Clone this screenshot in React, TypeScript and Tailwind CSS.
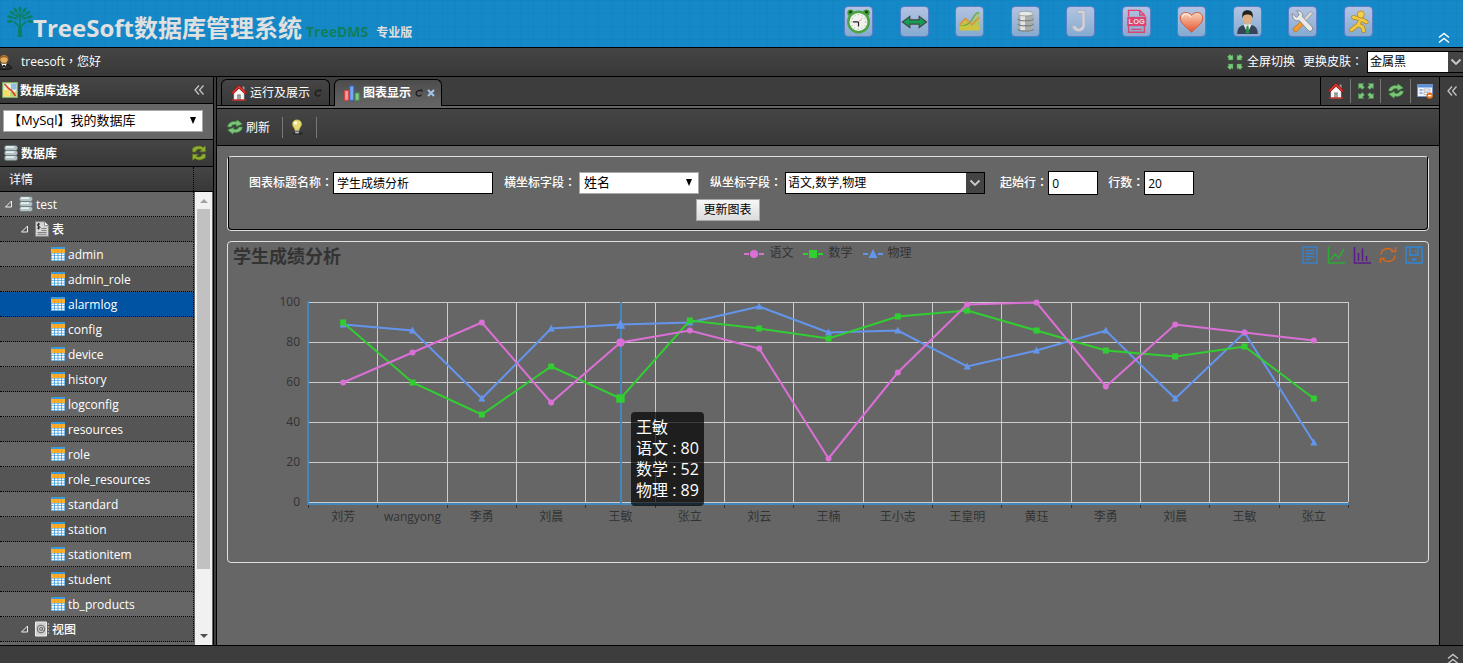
import { useState, type ReactNode } from 'react';

type Kind = 'circle' | 'square' | 'triangle';

interface Series {
  name: string;
  color: string;
  kind: Kind;
  values: number[];
}

const CATEGORIES = ['刘芳', 'wangyong', '李勇', '刘晨', '王敏', '张立', '刘云', '王楠', '王小志', '王皇明', '黄珏', '李勇', '刘晨', '王敏', '张立'];

const SERIES: Series[] = [
  { name: '语文', color: '#da70d6', kind: 'circle', values: [60, 75, 90, 50, 80, 86, 77, 22, 65, 99, 100, 58, 89, 85, 81] },
  { name: '数学', color: '#32cd32', kind: 'square', values: [90, 60, 44, 68, 52, 91, 87, 82, 93, 96, 86, 76, 73, 78, 52] },
  { name: '物理', color: '#6495ed', kind: 'triangle', values: [89, 86, 52, 87, 89, 90, 98, 85, 86, 68, 76, 86, 52, 85, 30] },
];

const TABLES = ['admin', 'admin_role', 'alarmlog', 'config', 'device', 'history', 'logconfig', 'resources', 'role', 'role_resources', 'standard', 'station', 'stationitem', 'student', 'tb_products'];

const BAR = 'bg-linear-to-b from-[#454545] to-[#383838]';

// full-width punctuation centred in its cell
function Punct({ children }: { children: string }) {
  return <span className="font-['Noto_Sans_CJK_TC',sans-serif] leading-none">{children}</span>;
}

/* ---------- small icons ---------- */

function Svg({ children, className = 'size-4', box = '0 0 16 16' }: { children: ReactNode; className?: string; box?: string }) {
  return (
    <svg viewBox={box} className={`shrink-0 ${className}`} fill="none" aria-hidden="true">
      {children}
    </svg>
  );
}

function HomeIcon() {
  return (
    <Svg>
      <path d="M11.5 1.5h2v4h-2z" fill="#999" />
      <path d="M3 8l5-5 5 5v7H3z" fill="#f7f7f7" stroke="#ccc" strokeWidth=".5" />
      <path d="M1 8.5L8 1.7l7 6.8" stroke="#b31312" strokeWidth="2.6" />
      <path d="M1.6 7.8L8 1.6l6.4 6.2" stroke="#f0594a" strokeWidth="1" />
      <path d="M6.3 9.5h3.4V15H6.3z" fill="#777" />
      <path d="M7.2 10.5h1.6V15H7.2z" fill="#aaa" />
      <path d="M1 15h14" stroke="#c9291f" strokeWidth="1.4" />
    </Svg>
  );
}

function RefreshIcon() {
  return (
    <Svg>
      <path d="M.6 8C.8 4.200 5 1.500 9.300 2.800L10 .8l5.400 4.300L9 7.800l.5-1.900C6.800 5 4.600 6 4.200 8z" fill="#7cc577" stroke="#3b8540" strokeWidth=".6" />
      <path d="M15.400 8c-.2 3.800-4.400 6.500-8.700 5.200L6 15.200.6 10.900 7 8.200l-.5 1.900c2.700.9 4.900-.1 5.300-2.100z" fill="#7cc577" stroke="#3b8540" strokeWidth=".6" />
    </Svg>
  );
}

function ExpandIcon() {
  return (
    <Svg>
      <g fill="#7cc57c" stroke="#3f8f44" strokeWidth=".4">
        <path d="M.5.5h5.500L4.500 2l2 2.200-2.300 2.300L2 4.500.5 6z" />
        <path d="M15.500.5H10L11.500 2l-2 2.200 2.300 2.300L14 4.500 15.500 6z" />
        <path d="M.5 15.500h5.500L4.500 14l2-2.200-2.300-2.300L2 11.500.5 10z" />
        <path d="M15.500 15.500H10l1.500-1.500-2-2.200 2.300-2.300L14 11.500l1.500-1.500z" />
      </g>
    </Svg>
  );
}

// four arrows that point inwards
function ShrinkIcon() {
  return (
    <Svg>
      <g fill="#7cc57c" stroke="#3f8f44" strokeWidth=".4">
        <path d="M6 6H.7L2 4.700.3 3 3 .3 4.700 2 6 .7z" />
        <path d="M10 6h5.300L14 4.700 15.700 3 13 .3 11.300 2 10 .7z" />
        <path d="M6 10H.7L2 11.300.3 13 3 15.700 4.700 14 6 15.300z" />
        <path d="M10 10h5.300L14 11.300l1.700 1.700-2.700 2.700-1.700-1.700-1.300 1.300z" />
      </g>
    </Svg>
  );
}

function FormDeleteIcon() {
  return (
    <Svg>
      <path d="M.5 1.500h15v12H.5z" fill="#eef4fc" stroke="#6c95cc" />
      <path d="M1 2h14v2.500H1z" fill="#5b8fdc" />
      <path d="M2.500 7h3M2.500 10h3" stroke="#4679b8" />
      <path d="M7 6h6v2H7zM7 9.500h4v2H7z" fill="#fff" stroke="#999" strokeWidth=".6" />
      <circle cx="12.700" cy="12.700" r="3" fill="#f07a1c" stroke="#b9500b" strokeWidth=".5" />
      <path d="M11 12.700h3.400" stroke="#fff" strokeWidth="1.200" />
    </Svg>
  );
}

function BarsIcon() {
  return (
    <Svg>
      <path d="M.7 5.500h4v9.800h-4z" fill="#f39a9a" stroke="#e23c3c" />
      <path d="M5.800 1h4v14.300h-4z" fill="#79a9ee" stroke="#2d68cf" />
      <path d="M11.100 8h4v7.300h-4z" fill="#86c68b" stroke="#3d9a45" />
    </Svg>
  );
}

function BulbIcon() {
  return (
    <Svg>
      <ellipse cx="9" cy="14.600" rx="5" ry="1" fill="#222" />
      <path d="M8 .8c2.900 0 4.700 2 4.700 4.500 0 2.300-2.300 3.200-2.500 5.900H5.800c-.2-2.700-2.500-3.600-2.500-5.900C3.300 2.800 5.100.8 8 .8z" fill="#e8da72" stroke="#a8963c" strokeWidth=".6" />
      <circle cx="6.500" cy="4" r="1.700" fill="#fffbd6" />
      <path d="M6.200 11.200h3.600v3.200H6.200z" fill="#bbb" />
      <path d="M6.200 12.500h3.600" stroke="#555" strokeWidth=".8" />
    </Svg>
  );
}

function MapIcon() {
  return (
    <Svg>
      <path d="M.7.7h14.600v14.600H.7z" fill="#e9efd0" stroke="#7fae62" strokeWidth="1.200" />
      <path d="M9 1.500h5.500v6H9z" fill="#8fbfe4" />
      <path d="M1.500 8h6v6.500h-6z" fill="#f5dc6a" />
      <path d="M8 10h6.500v4.500H8z" fill="#b9d66f" />
      <path d="M2.500 2l4 4.500L10 9l3.500 5" stroke="#dd3b2b" strokeWidth="1.600" />
    </Svg>
  );
}

function DatabaseIcon() {
  return (
    <Svg>
      {[0.5, 5.5, 10.5].map((y) => (
        <g key={y}>
          <rect x="1.500" y={y} width="13" height="5" rx="2" fill="#b4c1c4" stroke="#62757a" strokeWidth=".7" />
          <path d={`M3 ${y + 1.6}h8`} stroke="#f4fafa" strokeWidth="1.400" />
        </g>
      ))}
    </Svg>
  );
}

function SyncIcon() {
  return (
    <Svg>
      <path d="M1.500 7V3.500C5 .5 9.500.5 12 2.500L14.500.8v6H8.700l2-2C8.600 3.300 5.500 4 4.500 7z" fill="#8fad2f" stroke="#5b7416" strokeWidth=".6" />
      <path d="M14.500 9v3.500C11 15.500 6.500 15.500 4 13.500l-2.500 1.700v-6h5.800l-2 2c2.100 1.500 5.200.8 6.200-2.200z" fill="#8fad2f" stroke="#5b7416" strokeWidth=".6" />
    </Svg>
  );
}

function InvoiceIcon() {
  return (
    <Svg>
      <path d="M1.500.7h9l4 4v10.600h-13z" fill="#d6d6d6" stroke="#888" />
      <path d="M10.500.7v4h4" fill="#fff" stroke="#888" />
      <path d="M7.500 7.500h5M7.500 9.500h5M3.500 11.500h9M3.500 13.300h9" stroke="#777" strokeWidth=".9" />
      <path d="M6 3.300C5 2.500 3.200 2.800 3.200 4S6 5 6 6.300 4 7.700 3 6.800M4.600 2v6.500" stroke="#222" strokeWidth=".9" />
    </Svg>
  );
}

function BookIcon() {
  return (
    <Svg>
      <path d="M1.500 1h11v14h-11z" fill="#cfcfcf" stroke="#f0f0f0" />
      <path d="M14.500 2v12" stroke="#999" strokeWidth="1.500" strokeDasharray="2 1" />
      <circle cx="7" cy="8" r="3.800" stroke="#666" />
      <circle cx="7" cy="8" r="1.500" stroke="#666" />
      <path d="M8.500 6.500v2.300c.5 1 1.700.6 1.900-.4" stroke="#666" strokeWidth=".8" />
    </Svg>
  );
}

function GridIcon() {
  return (
    <Svg>
      <path d="M1 1h14v14H1z" fill="#3c9ad8" />
      <path d="M1 3h14v4H1z" fill="#fbb02d" />
      {[7.5, 10, 12.5].map((y) =>
        [1.6, 5, 8.4, 11.8].map((x) => <rect key={`${x}-${y}`} x={x} y={y} width="2.600" height="1.800" fill="#fff" />)
      )}
      <path d="M4.700 3v4M8.100 3v4M11.400 3v4" stroke="#f28c13" strokeWidth=".6" />
    </Svg>
  );
}

function UserIcon() {
  return (
    <Svg className="h-4 w-3" box="4 0 12 16">
      <path d="M1 14.500c0-3 3-4.500 7-4.500s7.500 1.500 7.500 4.500c-3 1.500-11.500 1.500-14.500 0z" fill="#2c2c2c" stroke="#0c0c0c" strokeWidth=".8" />
      <path d="M5 9.500h6L8 14z" fill="#fff" />
      <path d="M7 11h2v2H7z" fill="#222" />
      <circle cx="8" cy="5.200" r="4.200" fill="#e3ab5e" stroke="#7a4c16" strokeWidth=".8" />
      <path d="M4 5C4 .5 12 .5 12 5c-2-2-5-2.400-8 0z" fill="#99601f" />
    </Svg>
  );
}

function ReloadMark() {
  return (
    <Svg className="size-2" box="0 0 8 8">
      <path d="M6.500 5.500A2.800 2.800 0 1 1 5.600 2" stroke="#1c1c1c" strokeWidth="1.300" />
      <path d="M4.500.5h3v3z" fill="#1c1c1c" />
    </Svg>
  );
}

function Chevrons({ dir, className }: { dir: 'up' | 'left'; className: string }) {
  return (
    <Svg className={`size-3 ${className}`} box="0 0 12 12">
      {dir === 'up' ? (
        <path d="M1 5.500l5-4 5 4M1 10.500l5-4 5 4" stroke="currentColor" strokeWidth="1.500" />
      ) : (
        <path d="M6 1.500L2 6l4 4.500M10.500 1.500l-4 4.500 4 4.500" stroke="currentColor" strokeWidth="1.300" />
      )}
    </Svg>
  );
}

function ComboArrow() {
  return (
    <Svg className="h-2 w-3" box="0 0 12 8">
      <path d="M1.500 1.500L6 6l4.500-4.500" stroke="#ccc" strokeWidth="1.800" />
    </Svg>
  );
}

function Logo() {
  return (
    <Svg className="mt-0.5 h-8 w-[26px]" box="1 2 26 33">
      <path d="M12.500 34l.5-11-5-5M15.500 34L15 23l5-5M14 34V12" stroke="#0c8067" strokeWidth="1.800" />
      <g fill="#0c8067">
        {[-100, -75, -50, -25, 0, 25, 50, 75, 100].map((a) => (
          <ellipse key={a} cx="14" cy="5.500" rx="1.500" ry="3.200" transform={`rotate(${a} 14 16)`} />
        ))}
        {[-75, -45, -15, 15, 45, 75].map((a) => (
          <ellipse key={a} cx="14" cy="11" rx="1.200" ry="2.300" transform={`rotate(${a} 14 16)`} />
        ))}
      </g>
    </Svg>
  );
}

/* ---------- header launchers ---------- */

const LAUNCHERS: { label: string; art: ReactNode }[] = [
  {
    label: '定时任务',
    art: (
      <>
        <circle cx="6" cy="6" r="3.500" fill="#3e9a36" />
        <circle cx="23" cy="6" r="3.500" fill="#3e9a36" />
        <circle cx="6" cy="5.500" r="1.500" fill="#163a12" />
        <circle cx="23" cy="5.500" r="1.500" fill="#163a12" />
        <circle cx="14.500" cy="16" r="11" fill="#f0f2ee" stroke="#4aa33f" strokeWidth="2.600" />
        <circle cx="14.500" cy="16" r="7.800" stroke="#999" strokeDasharray="1 3" />
        <path d="M14.500 16H8.500M14.500 16v5" stroke="#222" strokeWidth="1.300" />
        <path d="M14.500 16l4-4" stroke="#e284a4" />
      </>
    ),
  },
  {
    label: '数据交换',
    art: <path d="M1.500 16l8-6v3.700h10V10l8 6-8 6v-3.700h-10V22z" fill="#169c55" stroke="#454545" strokeWidth="1.200" />,
  },
  {
    label: '图表',
    art: (
      <>
        <path d="M4 20l6-7 6 5 9-7v14H4z" fill="#c9c24a" />
        <path d="M4 20c8 1 12-4 14-8s4-6 7-6v13c-5 2-12 4-21 0z" fill="#a9c96b" opacity=".7" />
        <path d="M4 20c8 1 12-4 14-8s4-6 7-6" stroke="#5da845" strokeWidth="1.200" />
        <path d="M4 19l6-7 7 7 8-8" stroke="#ea8b2f" strokeWidth="1.400" />
        <path d="M4 20h21v5H4z" fill="#cdc43f" />
      </>
    ),
  },
  {
    label: '数据库',
    art: (
      <>
        <path d="M6.500 7v17c0 3 16.500 3 16.500 0V7z" fill="#a9adac" />
        <path d="M9 8v17h5V8z" fill="#e0e3e2" />
        <ellipse cx="14.700" cy="7" rx="8.200" ry="2.500" fill="#e6e9e8" stroke="#8d9392" strokeWidth=".8" />
        <path d="M6.500 12.500c0 3 16.500 3 16.500 0M6.500 18c0 3 16.500 3 16.500 0M6.500 23.500c0 3 16.500 3 16.500 0" stroke="#747a79" strokeWidth="1.200" />
      </>
    ),
  },
  {
    label: 'JSON',
    art: <path d="M11 3.500h8.500V20c0 8.500-13.500 8.500-14 0h4.200c.5 4 6.300 3.500 6.300-.5V7H11z" fill="#d1d1da" stroke="#a9adbd" strokeWidth=".8" />,
  },
  {
    label: '日志',
    art: (
      <>
        <path d="M6 10V3.500h12l5 5V10M18 3.500v5h5M6 20v7h17v-7M9 24h11" stroke="#dc4570" strokeWidth="1.500" />
        <path d="M4.500 10.500H25v10H4.500z" fill="#dc4570" />
        <text x="14.700" y="18.500" textAnchor="middle" fontSize="8" fontWeight="700" fill="#e8dfe8" fontFamily="Liberation Sans, sans-serif">
          LOG
        </text>
      </>
    ),
  },
  {
    label: '收藏',
    art: (
      <>
        <path d="M14.500 27C9 21.500 2.500 18 2.500 11.500 2.500 5 11.500 4 14.500 9c3-5 12-4 12 2.500 0 6.500-6.500 10-12 15.500z" fill="url(#heart)" stroke="#ca5738" />
        <path d="M4.500 11c.5-4.500 7-5 9.500 0" stroke="#fbe5d6" strokeWidth="1.500" />
      </>
    ),
  },
  {
    label: '用户',
    art: (
      <>
        <path d="M3.500 29c0-8.500 4.500-9.500 11-10.500 6.500 1 11 2 11 10.500z" fill="#354559" />
        <path d="M10 18.500h9L14.500 28z" fill="#ecf0ec" />
        <path d="M13.500 20h2l1 8h-4z" fill="#2f8a4c" />
        <ellipse cx="14.500" cy="12" rx="5" ry="6.500" fill="#e0ae80" />
        <path d="M9 12C8 5 11 3.500 15 3.500s6 3 5 8.500c-1-3-2-4-5.500-4S10 9 9 12z" fill="#222" />
      </>
    ),
  },
  {
    label: '设置',
    art: (
      <>
        <path d="M23 4.500L25.500 7 16 17l-2-2z" fill="#d9dbda" stroke="#888" strokeWidth=".7" />
        <path d="M13.500 15l3 3L8 26.500c-2 .5-4-1.500-3.500-3.500z" fill="#f09a31" stroke="#b86b17" strokeWidth=".7" />
        <path d="M3.500 7l4.500 4 3-2.500L8.500 4c4-.5 7 3 6 6.500L25 21.500c1.500 3-1.500 5.500-4 4L11 14.500C7 16 3 12 3.500 7z" fill="#e7e9ea" stroke="#777" strokeWidth=".8" />
      </>
    ),
  },
  {
    label: '退出',
    art: (
      <>
        <g stroke="#ad7f13" strokeLinecap="round" strokeLinejoin="round" strokeWidth="4.600">
          <path d="M17 13l-3 6M9 11l8 2 6 3M14 19l-7 5.500M14 19l5 2.500 1 4" />
        </g>
        <g stroke="#f0c841" strokeLinecap="round" strokeLinejoin="round" strokeWidth="3.200">
          <path d="M17 13l-3 6M9 11l8 2 6 3M14 19l-7 5.500M14 19l5 2.500 1 4" />
        </g>
        <circle cx="17" cy="8" r="3.800" fill="#f3cf4e" stroke="#ad7f13" strokeWidth=".8" />
      </>
    ),
  },
];

function Header() {
  return (
    <header className="flex h-12 shrink-0 items-start border-b border-black bg-[#1588c8] bg-[linear-gradient(rgba(0,0,0,0.03)_1px,transparent_1px),linear-gradient(90deg,rgba(0,0,0,0.03)_1px,transparent_1px)] bg-[size:13px_13px]">
      <div className="flex items-start pl-[7px] pt-1">
        <Logo />
        <h1 className="flex items-baseline whitespace-nowrap pt-2 font-bold">
          <span className="text-2xl text-[#e0e0e0]">TreeSoft数据库管理系统</span>
          <span className="ml-1 text-sm text-[#0f7f5c]">TreeDMS</span>
          <span className="ml-2 text-xs text-[#e0e0e0]">专业版</span>
        </h1>
      </div>
      <nav className="ml-auto mr-[65px] flex w-[529px] justify-between pt-1.5">
        {LAUNCHERS.map(({ label, art }) => (
          <button
            key={label}
            type="button"
            aria-label={label}
            className="h-[31px] w-[29px] rounded border border-[#5c7fc8] bg-linear-to-b from-[#b3c3e2] to-[#84abd0]"
          >
            <Svg className="h-[29px] w-[27px]" box="0 0 29 31">
              <defs>
                <linearGradient id="heart" x1="0" y1="0" x2="0" y2="1">
                  <stop offset="0" stopColor="#f8d4ba" />
                  <stop offset="1" stopColor="#e6532f" />
                </linearGradient>
              </defs>
              {art}
            </Svg>
          </button>
        ))}
      </nav>
      <button type="button" aria-label="收起顶部" className="mr-[13px] mt-8">
        <Chevrons dir="up" className="text-white" />
      </button>
    </header>
  );
}

function UserBar() {
  const [skin, setSkin] = useState('金属黑');
  return (
    <div className={`flex h-[29px] shrink-0 items-center border-b border-black ${BAR}`}>
      <UserIcon />
      <span className="ml-[9px]">
        treesoft<Punct>，</Punct>您好
      </span>
      <button type="button" className="ml-auto flex items-center gap-1">
        <ShrinkIcon />
        全屏切换
      </button>
      <label htmlFor="skin" className="ml-2">
        更换皮肤<Punct>：</Punct>
      </label>
      <div className="ml-1 flex h-[22px] border border-r-0 border-black">
        <input id="skin" value={skin} onChange={(e) => setSkin(e.target.value)} className="w-20 bg-white px-0.5 text-black" />
        <button type="button" aria-label="选择皮肤" className="flex w-[15px] items-center justify-center bg-[#444]">
          <ComboArrow />
        </button>
      </div>
    </div>
  );
}

/* ---------- sidebar ---------- */

function NativeSelect({ id, label, options, className }: { id: string; label?: string; options: string[]; className: string }) {
  return (
    <div className={`relative ${className}`}>
      <select id={id} aria-label={label} className="block h-[22px] w-full appearance-none border border-[#a9a9a9] bg-white pl-1 text-[13px] text-black">
        {options.map((o) => (
          <option key={o}>{o}</option>
        ))}
      </select>
      <svg viewBox="0 0 8 7" className="pointer-events-none absolute right-1.5 top-[7px] h-[7px] w-2" aria-hidden="true">
        <path d="M1 0h6L4 7z" fill="#000" />
      </svg>
    </div>
  );
}

function TreeRow({ index, level, icon, label, selected }: { index: number; level: number; icon: ReactNode; label: string; selected?: boolean }) {
  const indent = ['pl-1', 'pl-5', 'pl-[50px]'][level];
  const bg = selected ? 'bg-[#0052a3]' : index % 2 ? 'bg-[#555]' : 'bg-[#666]';
  return (
    <li className={`flex h-[25px] items-center border-b border-r border-dotted border-black ${indent} ${bg}`}>
      {level < 2 && (
        <Svg className="mr-1 size-2.5" box="0 0 10 10">
          <path d="M7.500 2v6h-6z" stroke="#eee" />
        </Svg>
      )}
      {icon}
      <span className="ml-0.5 pt-0.5 text-xs font-medium">{label}</span>
    </li>
  );
}

function Sidebar() {
  return (
    <aside className="flex w-[214px] shrink-0 flex-col border-r border-black">
      <div className={`flex h-[27px] shrink-0 items-center border-b border-black pl-0.5 pr-2 ${BAR}`}>
        <MapIcon />
        <h2 className="ml-0.5 pt-0.5 font-bold">数据库选择</h2>
        <button type="button" aria-label="收起" className="ml-auto">
          <Chevrons dir="left" className="text-[#c4c4c4]" />
        </button>
      </div>
      <div className="h-9 shrink-0 border-b border-black bg-[#666] pl-[3px] pt-1.5">
        <NativeSelect id="db" label="数据库选择" options={['【MySql】我的数据库']} className="w-[200px]" />
      </div>
      <div className={`flex h-[27px] shrink-0 items-center border-b border-black pl-[3px] pr-1.5 ${BAR}`}>
        <DatabaseIcon />
        <h2 className="ml-0.5 pt-0.5 font-bold">数据库</h2>
        <button type="button" aria-label="刷新数据库" className="ml-auto">
          <SyncIcon />
        </button>
      </div>
      <div className={`flex h-[25px] shrink-0 border-b border-black ${BAR}`}>
        <div className="flex flex-1 items-center border-r border-dotted border-black pl-[9px] pt-0.5">详情</div>
        <div className="w-[19px]" />
      </div>
      <div className="flex min-h-0 flex-1 bg-[#666]">
        <ul className="flex-1 overflow-hidden">
          <TreeRow index={0} level={0} icon={<DatabaseIcon />} label="test" />
          <TreeRow index={1} level={1} icon={<InvoiceIcon />} label="表" />
          {TABLES.map((t, i) => (
            <TreeRow key={t} index={i} level={2} icon={<GridIcon />} label={t} selected={t === 'alarmlog'} />
          ))}
          <TreeRow index={17} level={1} icon={<BookIcon />} label="视图" />
        </ul>
        <div className="ml-px mr-px flex w-[17px] flex-col items-center bg-[#f1f1f1]" aria-hidden="true">
          <Svg className="h-[17px] w-2" box="0 0 8 17">
            <path d="M0 11h8L4 7z" fill="#a3a3a3" />
          </Svg>
          <div className="w-[13px] flex-[4] bg-[#c1c1c1]" />
          <div className="flex-[0.65]" />
          <Svg className="h-[17px] w-2" box="0 0 8 17">
            <path d="M0 6h8l-4 4z" fill="#505050" />
          </Svg>
        </div>
      </div>
    </aside>
  );
}

/* ---------- main area ---------- */

function TabStrip() {
  return (
    <div className="flex h-[29px] shrink-0 border-b border-black bg-[#3d3d3d]">
      <div className="flex items-end gap-1 pl-1" role="tablist">
        <div className={`flex h-[26px] w-[109px] items-center rounded-t-md border border-b-0 border-black pl-[9px] ${BAR}`}>
          <button type="button" role="tab" aria-selected="false" className="flex items-center gap-[3px]">
            <HomeIcon />
            运行及展示
          </button>
          <button type="button" aria-label="刷新标签" className="ml-1">
            <ReloadMark />
          </button>
        </div>
        <div className="-mb-px flex h-[27px] w-[108px] items-center rounded-t-md border border-b-0 border-black bg-linear-to-b from-[#4c4c4c] to-[#666] pl-[9px]">
          <button type="button" role="tab" aria-selected="true" className="flex items-center gap-[3px] font-bold">
            <BarsIcon />
            图表显示
          </button>
          <button type="button" aria-label="刷新标签" className="ml-1">
            <ReloadMark />
          </button>
          <button type="button" aria-label="关闭标签" className="ml-1">
            <Svg className="size-2" box="0 0 8 8">
              <path d="M1 1l6 6M7 1L1 7" stroke="#a5c5e6" strokeWidth="2" />
            </Svg>
          </button>
        </div>
      </div>
      <div className="ml-auto flex items-center border-l border-black">
        {[
          ['首页', <HomeIcon />],
          ['全屏', <ExpandIcon />],
          ['刷新', <RefreshIcon />],
          ['关闭', <FormDeleteIcon />],
        ].map(([label, icon], i) => (
          <button
            key={label as string}
            type="button"
            aria-label={label as string}
            className={`flex h-6 items-center justify-center ${i === 3 ? 'w-7' : 'w-[30px] border-r border-[#777]'}`}
          >
            {icon}
          </button>
        ))}
      </div>
    </div>
  );
}

const TEXT_INPUT = 'border border-black bg-white text-xs text-black';

function FieldLabel({ htmlFor, text, className = '' }: { htmlFor: string; text: string; className?: string }) {
  return (
    <label htmlFor={htmlFor} className={`font-medium ${className}`}>
      {text}
      <Punct>：</Punct>
    </label>
  );
}

function ChartForm() {
  return (
    <div className="rounded border border-[#e0e0e0]">
      <form className="rounded-b border border-t-0 border-black pb-2 pl-5 pt-3.5" onSubmit={(e) => e.preventDefault()}>
        <div className="inline-flex flex-col items-center gap-1">
          <div className="flex items-center pr-3">
            <FieldLabel htmlFor="title" text="图表标题名称" />
            <input id="title" defaultValue="学生成绩分析" className={`h-[22px] w-40 px-[3px] ${TEXT_INPUT}`} />
            <FieldLabel htmlFor="xfield" text="横坐标字段" className="ml-[11px]" />
            <NativeSelect id="xfield" options={['姓名']} className="ml-[3px] w-[120px]" />
            <FieldLabel htmlFor="yfield" text="纵坐标字段" className="ml-[11px]" />
            <div className="ml-[3px] flex h-[22px] w-[200px] border border-black">
              <input id="yfield" defaultValue="语文,数学,物理" className="min-w-0 flex-1 bg-white px-0.5 text-xs text-black" />
              <button type="button" aria-label="选择字段" className="flex w-[18px] items-center justify-center bg-[#444]">
                <ComboArrow />
              </button>
            </div>
            <FieldLabel htmlFor="start" text="起始行" className="ml-[15px]" />
            <input id="start" defaultValue="0" className={`h-6 w-[50px] px-[3px] ${TEXT_INPUT}`} />
            <FieldLabel htmlFor="rows" text="行数" className="ml-2.5" />
            <input id="rows" defaultValue="20" className={`h-6 w-[50px] px-[3px] ${TEXT_INPUT}`} />
          </div>
          <button type="submit" className="h-[22px] w-16 border border-[#a9a9a9] bg-linear-to-b from-[#f6f6f6] to-[#dcdcdc] text-xs text-black">
            更新图表
          </button>
        </div>
      </form>
    </div>
  );
}

function Marker({ kind, x, y, r, color }: { kind: Kind; x: number; y: number; r: number; color: string }) {
  if (kind === 'circle') return <circle cx={x} cy={y} r={r} fill={color} />;
  if (kind === 'square') return <rect x={x - r} y={y - r} width={r * 2} height={r * 2} fill={color} />;
  return <path d={`M${x} ${y - r - 1}L${x + r + 0.5} ${y + r}H${x - r - 0.5}z`} fill={color} />;
}

// plot area inside the 1200x292 drawing
const LEFT = 80;
const TOP = 32;
const PLOT_W = 1040;
const PLOT_H = 200;
const STEP = PLOT_W / CATEGORIES.length;
const ACTIVE = 4;

const px = (i: number) => LEFT + STEP * (i + 0.5) + 0.5;
const py = (v: number) => TOP + PLOT_H - (v / 100) * PLOT_H;

function LineChart() {
  return (
    <svg viewBox="0 0 1200 292" className="block w-full text-xs" role="img" aria-label="学生成绩分析">
      <g stroke="#ccc" shapeRendering="crispEdges">
        {[0, 20, 40, 60, 80, 100].map((v) => (
          <line key={v} x1={LEFT} x2={LEFT + PLOT_W} y1={py(v) + 0.5} y2={py(v) + 0.5} />
        ))}
        {Array.from({ length: 16 }, (_, i) => {
          const x = Math.round(LEFT + STEP * i) + 0.5;
          return <line key={i} x1={x} x2={x} y1={TOP} y2={TOP + PLOT_H} />;
        })}
      </g>
      <g stroke="#333" shapeRendering="crispEdges">
        {Array.from({ length: 16 }, (_, i) => {
          const x = Math.round(LEFT + STEP * i) + 0.5;
          return <line key={i} x1={x} x2={x} y1={235} y2={238} />;
        })}
      </g>
      <g stroke="#48b" strokeWidth="2" shapeRendering="crispEdges">
        <line x1={LEFT} x2={LEFT} y1={TOP - 1} y2={TOP + PLOT_H + 3} />
        <line x1={LEFT - 1} x2={LEFT + PLOT_W + 1} y1={TOP + PLOT_H + 2} y2={TOP + PLOT_H + 2} />
        <line x1={393} x2={393} y1={TOP} y2={TOP + PLOT_H + 1} />
      </g>
      <g fill="#333" textAnchor="end">
        {[0, 20, 40, 60, 80, 100].map((v) => (
          <text key={v} x="72" y={py(v) + 4}>{v}</text>
        ))}
      </g>
      <g fill="#333" textAnchor="middle">
        {CATEGORIES.map((c, i) => (
          <text key={i} x={px(i)} y="251">{c}</text>
        ))}
      </g>
      {[...SERIES].reverse().map((s) => (
        <g key={s.name}>
          <polyline points={s.values.map((v, i) => `${px(i)},${py(v) + 0.5}`).join(' ')} fill="none" stroke={s.color} strokeWidth="2" />
          {s.values.map((v, i) => (
            <Marker key={i} kind={s.kind} x={px(i)} y={py(v) + 0.5} r={i === ACTIVE ? 4.2 : 3} color={s.color} />
          ))}
        </g>
      ))}
    </svg>
  );
}

const TOOLS: { label: string; color: string; art: ReactNode }[] = [
  { label: '数据视图', color: '#3a7fc8', art: <path d="M2 1h14v16H2zM4.500 4.500h9M4.500 7.500h9M4.500 10.500h9M4.500 13.500h5" /> },
  { label: '折线图切换', color: '#2fa838', art: <path d="M1.500 1v16H18M3.500 14L8 8l3.500 4L17 3" /> },
  { label: '柱形图切换', color: '#5b1b8c', art: <path d="M1.500 1v16H18M5.500 15V7M9.500 15V2.500M13.500 15V10" /> },
  { label: '还原', color: '#d2691e', art: <path d="M2 8.500C2.500 3 9 .5 14 4.500M12 5.500h4.500V1M16 9.500C15.500 15 9 17.500 4 13.500M6 12.500H1.500V17" /> },
  { label: '保存为图片', color: '#2f86d8', art: <path d="M1 1h16v16H1zM5 1v8h8V1M10.500 4v2M6.500 13.500h5M9 12v3" /> },
];

function ChartPanel() {
  return (
    <section className="relative mt-2.5 rounded border border-[#e0e0e0]">
      <div className="grid h-7 grid-cols-3 items-start px-[5px]">
        <h2 className="text-lg leading-7 font-bold text-[#333]">学生成绩分析</h2>
        <ul className="mt-[3px] flex justify-center gap-2.5">
          {SERIES.map((s) => (
            <li key={s.name} className="flex items-center gap-[5px] text-xs text-[#333]">
              <Svg className="h-3 w-5" box="0 0 20 12">
                <path d="M0 7h5M15 7h5" stroke={s.color} strokeWidth="2" />
                <Marker kind={s.kind} x={10} y={7} r={4} color={s.color} />
              </Svg>
              {s.name}
            </li>
          ))}
        </ul>
        <div className="mt-1 flex justify-end gap-2">
          {TOOLS.map((t) => (
            <button key={t.label} type="button" aria-label={t.label} style={{ color: t.color }}>
              <Svg className="size-[18px]" box="0 0 18 18">
                <g stroke="currentColor" strokeWidth="1.500">{t.art}</g>
              </Svg>
            </button>
          ))}
        </div>
      </div>
      <LineChart />
      <div className="absolute left-[403px] top-[170px] whitespace-nowrap rounded bg-black/70 p-[5px] text-base leading-[21px] text-white">
        <div>{CATEGORIES[ACTIVE]}</div>
        {SERIES.map((s) => (
          <div key={s.name}>{s.name} : {s.values[ACTIVE]}</div>
        ))}
      </div>
    </section>
  );
}

export default function App() {
  return (
    <div className="flex h-screen flex-col overflow-hidden bg-[#3d3d3d] font-['Open_Sans','Noto_Sans_CJK_SC',sans-serif] text-xs text-white">
      <Header />
      <UserBar />
      <div className="flex min-h-0 flex-1">
        <Sidebar />
        <main className="ml-0.5 flex min-w-0 flex-1 flex-col border-x border-black bg-[#666]">
          <TabStrip />
          <div className={`mt-0.5 flex h-[38px] shrink-0 items-center border-y border-black pl-2.5 ${BAR}`}>
            <button type="button" className="flex items-center gap-[3px]">
              <RefreshIcon />
              <span className="pt-0.5">刷新</span>
            </button>
            <div className="ml-3 h-[21px] w-px bg-[#777]" />
            <button type="button" aria-label="帮助" className="mx-1.5">
              <BulbIcon />
            </button>
            <div className="ml-[5px] h-[21px] w-px bg-[#777]" />
          </div>
          <div className="flex-1 overflow-hidden p-2.5">
            <ChartForm />
            <ChartPanel />
          </div>
        </main>
        <aside className="flex w-[23px] shrink-0 justify-center pt-2">
          <button type="button" aria-label="展开" className="h-3">
            <Chevrons dir="left" className="text-[#c4c4c4]" />
          </button>
        </aside>
      </div>
      <footer className="flex h-[18px] shrink-0 justify-end border-t border-black pr-1 pt-[7px]">
        <button type="button" aria-label="展开底部" className="h-3">
          <Chevrons dir="up" className="text-[#c4c4c4]" />
        </button>
      </footer>
    </div>
  );
}
